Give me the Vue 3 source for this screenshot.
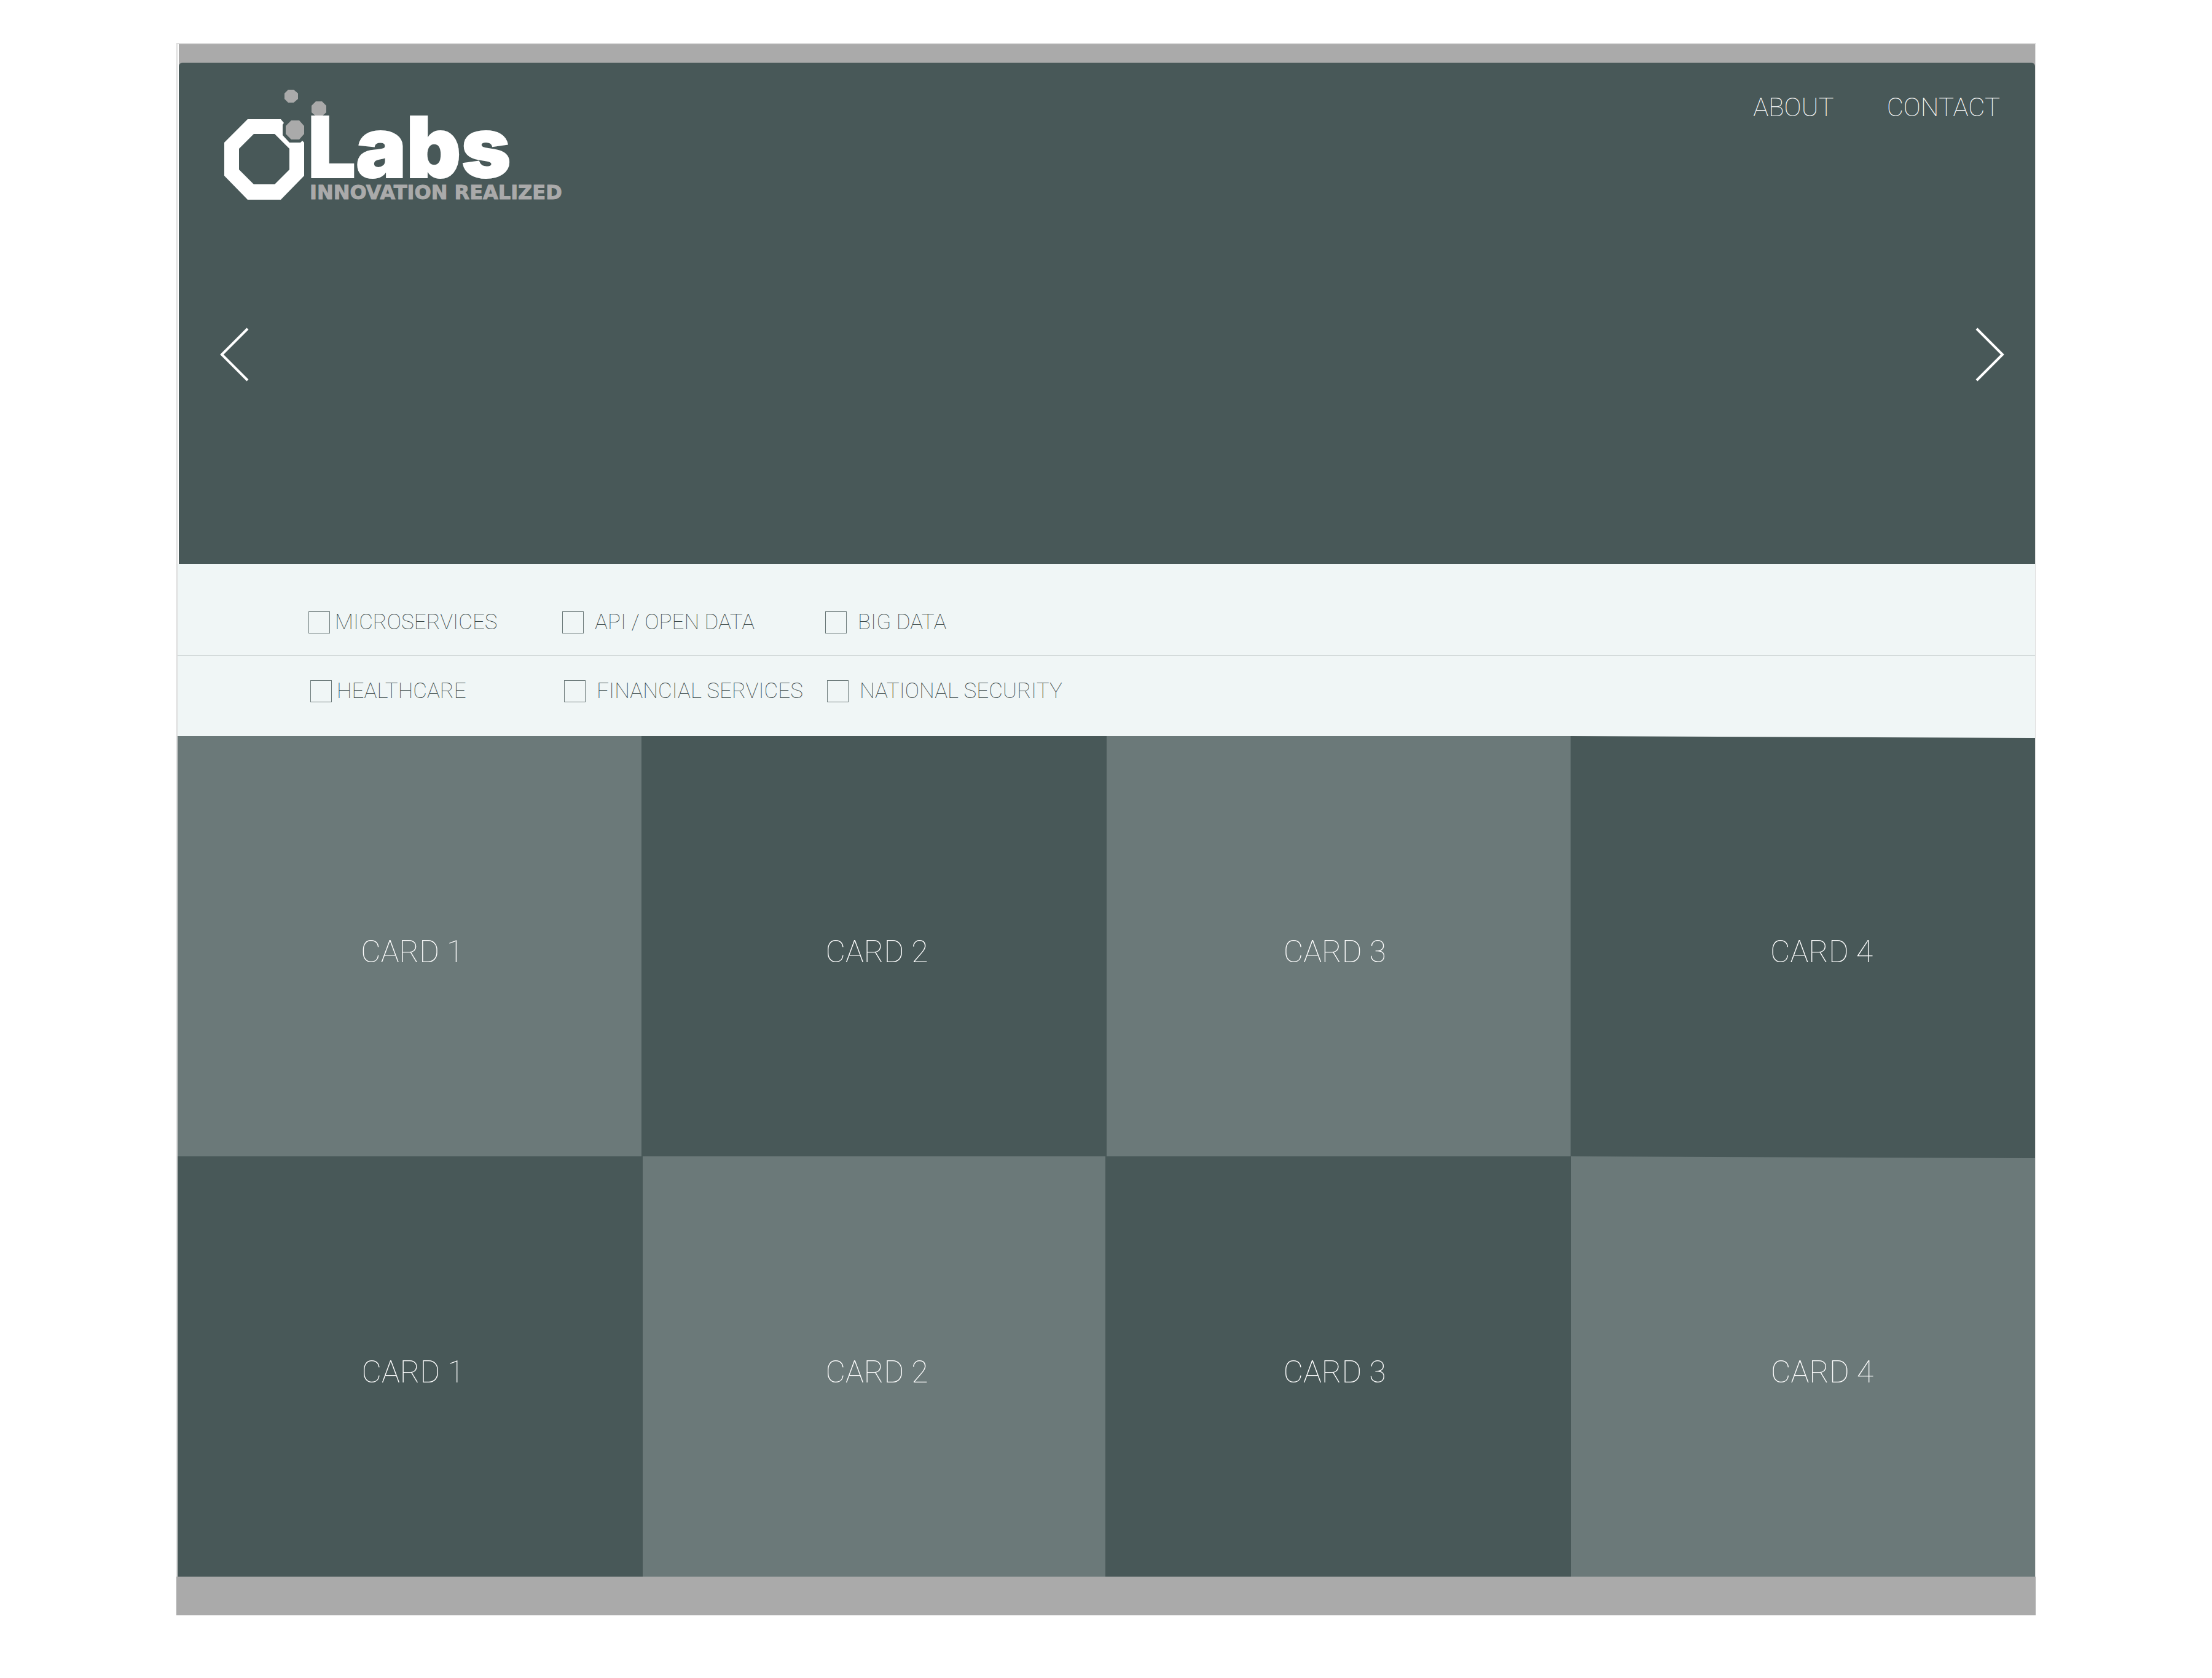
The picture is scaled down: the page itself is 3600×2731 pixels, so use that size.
<script setup>
import { ref } from 'vue'

const filterRows = [
  ['MICROSERVICES', 'API / OPEN DATA', 'BIG DATA'],
  ['HEALTHCARE', 'FINANCIAL SERVICES', 'NATIONAL SECURITY'],
]
const cardRows = [
  ['CARD 1', 'CARD 2', 'CARD 3', 'CARD 4'],
  ['CARD 1', 'CARD 2', 'CARD 3', 'CARD 4'],
]
const selected = ref([])
</script>

<template>
  <div class="frame">
    <div class="topbar"></div>
    <section class="hero">
      <header class="header">
        <svg class="logo" viewBox="0 0 580 200" role="img" aria-label="O Labs, Innovation Realized">
          <path
            fill="#fff"
            fill-rule="evenodd"
            d="M43 54H97L102 60L100 63V80L111 92H129L132 89L135 92V146L97 185H43L5 146V92ZM53 78L29 102V136L53 160H87L111 136V102L87 78Z"
          />
          <g fill="#aaa">
            <path d="M109 6H118L125 12V21L118 27H109L103 21V12Z" />
            <path d="M154 25H164L171 32V43L164 49H154L147 43V32Z" />
            <path d="M114 56H127L135 65V78L127 87H114L105 78V65Z" />
          </g>
          <text class="brand" x="141" y="149">Labs</text>
          <text class="tagline" x="144" y="184">INNOVATION REALIZED</text>
        </svg>
        <nav class="nav">
          <a href="#about">ABOUT</a>
          <a href="#contact">CONTACT</a>
        </nav>
      </header>
      <div class="carousel">
        <button type="button" class="arrow" aria-label="Previous">
          <svg viewBox="0 0 50 90"><path d="M46 3L4 45L46 87" /></svg>
        </button>
        <button type="button" class="arrow" aria-label="Next">
          <svg viewBox="0 0 50 90"><path d="M4 3L46 45L4 87" /></svg>
        </button>
      </div>
    </section>

    <form class="filters">
      <div v-for="(row, r) in filterRows" :key="r" class="filter-row">
        <label v-for="name in row" :key="name" class="filter">
          <input v-model="selected" type="checkbox" :value="name" />
          <span>{{ name }}</span>
        </label>
      </div>
    </form>

    <main>
      <div v-for="(row, r) in cardRows" :key="r" class="card-row">
        <article v-for="name in row" :key="name" class="card">{{ name }}</article>
      </div>
    </main>
    <footer class="footer"></footer>
  </div>
</template>

<style>
body {
  background: #fff;
}
</style>

<style scoped>
.frame {
  margin: 70px calc(8% - 1px) 0;
  border: solid #ddd;
  border-width: 2px 1px 0 2px;
  font-family: Roboto, sans-serif;
  font-weight: 100;
}
.topbar {
  height: 36px;
  margin: 0 0 -6px 2px;
  background: #aaa;
}
.hero {
  position: relative;
  box-sizing: border-box;
  margin-left: 2px;
  padding-bottom: 296px;
  border-radius: 6px 6px 0 0;
  background: #485858;
}
.header {
  display: flex;
  justify-content: space-between;
  padding: 38px 57px 0 69px;
}
.logo {
  display: block;
  width: 580px;
  height: 200px;
}
.brand {
  font-family: Inter, sans-serif;
  font-size: 138px;
  font-weight: 900;
  fill: #fff;
  stroke: #fff;
  stroke-width: 2;
}
.tagline {
  font-family: "DejaVu Sans", sans-serif;
  font-size: 32px;
  font-weight: 700;
  fill: #aaa;
  stroke: #aaa;
  stroke-width: 1;
}
.nav {
  display: flex;
  gap: 86px;
  padding-top: 11px;
}
.nav a {
  font-size: 42px;
  line-height: 48px;
  color: #fff;
  text-decoration: none;
}
.carousel {
  display: flex;
  justify-content: space-between;
  padding: 192px 49px 0 66px;
}
.arrow {
  padding: 0;
  border: 0;
  background: none;
  cursor: pointer;
}
.arrow svg {
  display: block;
  width: 50px;
  height: 90px;
  fill: none;
  stroke: #fff;
  stroke-width: 4;
}
.filters {
  background: #f0f6f6;
}
.filter-row {
  display: grid;
  grid-template-columns: 413px 428px 1fr;
  padding: 77px 0 35px 213px;
  border-bottom: 1px solid #c5cccc;
}
.filter-row + .filter-row {
  padding: 40px 0 55px 216px;
  border-bottom: 0;
}
.filter {
  display: flex;
  align-items: center;
  gap: 18px;
  font-size: 35px;
  line-height: 36px;
  color: #3c4a4a;
  white-space: nowrap;
}
.filter:first-child {
  gap: 8px;
}
.filter input {
  appearance: none;
  box-sizing: border-box;
  flex: none;
  width: 35px;
  height: 36px;
  margin: 0;
  border: 1px solid #6b7979;
}
.filter input:checked {
  background: #6b7979;
}
.card-row {
  display: grid;
  grid-template-columns: 755fr 758fr 754fr 757fr;
  background: #f0f6f6;
}
.card-row + .card-row {
  grid-template-columns: 757fr 753fr 758fr 755fr;
  background: #485858;
}
.card {
  display: flex;
  align-items: center;
  justify-content: center;
  box-sizing: border-box;
  height: 684px;
  padding: 17px 0 0 9px;
  font-size: 50px;
  line-height: 60px;
  color: #fff;
  background: #485858;
}
.card-row:first-child .card:nth-child(odd),
.card-row:last-child .card:nth-child(even) {
  background: #6b7979;
}
.card:nth-child(3) {
  padding: 17px 12px 0 0;
}
.card:nth-child(4) {
  padding-left: 62px;
  clip-path: polygon(0 0, 100% 3px, 100% 100%, 0 100%);
}
.footer {
  height: 63px;
  margin: 0 -1px 0 -2px;
  background: #aaa;
}
</style>
